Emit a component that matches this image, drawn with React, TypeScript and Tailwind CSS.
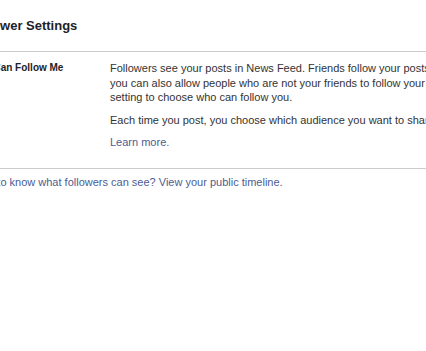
export default function App() {
  return (
    <div className="w-full h-screen overflow-hidden bg-white" style={{ fontFamily: '"Liberation Sans", Arial, sans-serif' }}>
      <div className="ml-[-31px] w-[600px]">
        <h2 className="pt-[17px] pb-[16px] text-[13px] font-bold leading-[18px] text-[#1d2129]">Follower Settings</h2>
        <div className="border-t border-[#cccccc]" />
        <div className="flex pt-[9px] pb-[18px]">
          <div className="w-[141px] shrink-0 text-[10px] font-bold leading-[14px] text-[#1d2129]">Who Can Follow Me</div>
          <div className="w-[440px] text-[11px] leading-[14.5px] text-[#333333]">
            <p>
              Followers see your posts in News Feed. Friends follow your posts by default, but
              <br />
              you can also allow people who are not your friends to follow your public posts. Use this setting to choose who can follow you.
            </p>
            <p className="mt-[8px]">Each time you post, you choose which audience you want to share with.</p>
            <p className="mt-[8px]">
              <a href="#" className="text-[#4b5d94]">Learn more.</a>
            </p>
          </div>
        </div>
        <div className="border-t border-[#cccccc]" />
        <p className="pt-[6px] text-[11px] leading-[14.5px] text-[#4b5d94]">
          Want to know what followers can see? <a href="#">View your public timeline.</a>
        </p>
      </div>
    </div>
  );
}
